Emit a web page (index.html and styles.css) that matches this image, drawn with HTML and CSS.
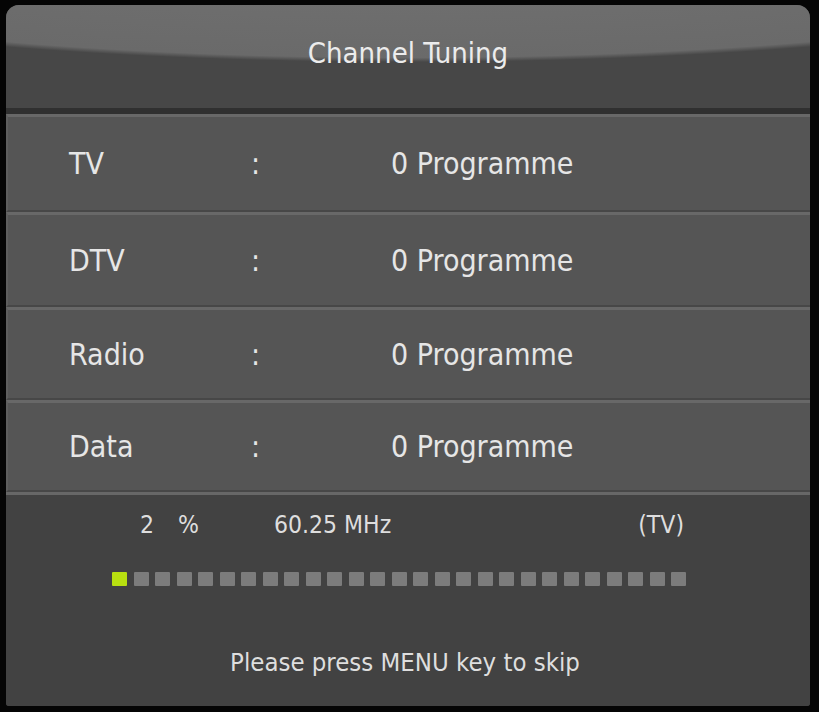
FILE: index.html
```html
<!DOCTYPE html>
<html>
<head>
<meta charset="utf-8">
<link rel="stylesheet" href="styles.css">
</head>
<body>
<div class="panel">
  <div class="header"><span class="title">Channel Tuning</span></div>
  <div class="rows">
    <div class="row"><span class="label">TV</span><span class="colon">:</span><span class="value">0 Programme</span></div>
    <div class="row"><span class="label">DTV</span><span class="colon">:</span><span class="value">0 Programme</span></div>
    <div class="row"><span class="label">Radio</span><span class="colon">:</span><span class="value">0 Programme</span></div>
    <div class="row"><span class="label">Data</span><span class="colon">:</span><span class="value">0 Programme</span></div>
  </div>
  <div class="status">
    <div class="info">
      <span class="pct-num">2</span>
      <span class="pct">%</span>
      <span class="freq">60.25 MHz</span>
      <span class="type">(TV)</span>
    </div>
    <div class="progress">
      <span class="sq on"></span><span class="sq"></span><span class="sq"></span><span class="sq"></span><span class="sq"></span><span class="sq"></span><span class="sq"></span><span class="sq"></span><span class="sq"></span><span class="sq"></span><span class="sq"></span><span class="sq"></span><span class="sq"></span><span class="sq"></span><span class="sq"></span><span class="sq"></span><span class="sq"></span><span class="sq"></span><span class="sq"></span><span class="sq"></span><span class="sq"></span><span class="sq"></span><span class="sq"></span><span class="sq"></span><span class="sq"></span><span class="sq"></span><span class="sq"></span>
    </div>
    <div class="hint">Please press MENU key to skip</div>
  </div>
</div>
</body>
</html>
```

FILE: styles.css
```css
html, body {
  margin: 0;
  padding: 0;
  background: #050505;
  width: 819px;
  height: 712px;
  overflow: hidden;
}
body {
  font-family: "DejaVu Sans Condensed", "DejaVu Sans", sans-serif;
  font-stretch: condensed;
  color: #e4e4e4;
}
.panel {
  margin: 5px 0 0 6px;
  width: 804px;
  height: 701px;
  background: #434343;
  border-radius: 13px 13px 3px 3px;
  overflow: hidden;
  display: flex;
  flex-direction: column;
}
.header {
  flex: none;
  height: 109px;
  box-sizing: border-box;
  border-bottom: 6px solid #303030;
  background:
    radial-gradient(ellipse 800px 112px at 50% -55px, #727272 0%, #6a6a6a 96%, #474747 100%);
  background-color: #474747;
  display: flex;
  justify-content: center;
  padding-top: 31px;
}
.title {
  font-size: 29px;
  line-height: 34px;
  color: #ececec;
}
.rows {
  display: grid;
  grid-template-rows: 98px 95px 93px 92px;
  flex: none;
}
.row {
  display: grid;
  grid-template-columns: 182px 140px 1fr;
  align-items: center;
  padding-left: 61px;
  background: #555555;
  border-top: 3px solid #686868;
  border-bottom: 2px solid #474747;
  border-left: 2px solid #5e5e5e;
  font-size: 30px;
  color: #e6e6e6;
}
.status {
  flex: 1;
  border-top: 3px solid #676767;
  background: #424242;
  display: flex;
  flex-direction: column;
}
.info {
  display: flex;
  padding: 16px 0 0 134px;
  font-size: 24.5px;
  line-height: 28px;
  color: #dedede;
}
.pct-num { width: 38px; }
.pct { width: 96px; }
.freq { flex: 1; }
.type { padding-right: 126px; }
.progress {
  display: flex;
  gap: 6.5px;
  margin: 33px 0 0 106px;
}
.sq {
  width: 15px;
  height: 14px;
  background: #7c7c7c;
  border-radius: 1px;
}
.sq.on {
  background: #b8e010;
}
.hint {
  margin-top: 61px;
  text-align: center;
  font-size: 25.5px;
  line-height: 30px;
  color: #dedede;
  padding-right: 6px;
}
```
